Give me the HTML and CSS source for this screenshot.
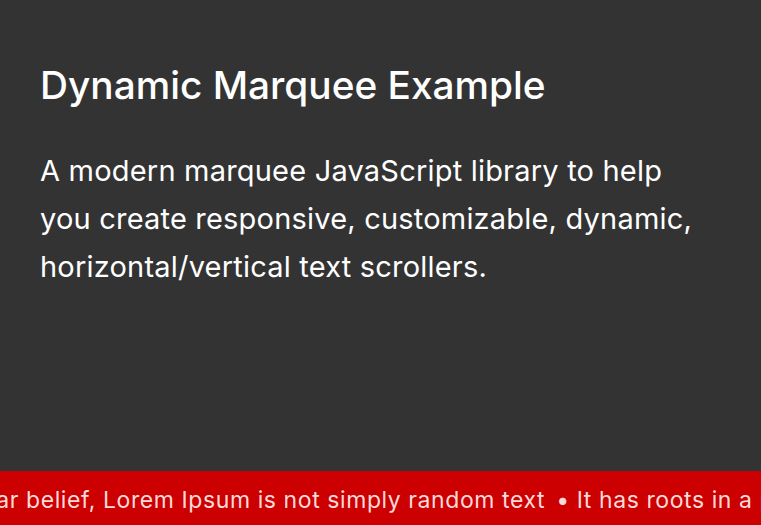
FILE: index.html
```html
<!DOCTYPE html>
<html>
<head>
<meta charset="utf-8">
<link rel="stylesheet" href="styles.css">
</head>
<body>
<div class="page">
  <main class="content">
    <h1 class="title">Dynamic Marquee Example</h1>
    <p class="lead">A modern marquee JavaScript library to help you create responsive, customizable, dynamic, horizontal/vertical text scrollers.</p>
  </main>
  <div class="marquee">
    <div class="track">Contrary to popular belief, Lorem Ipsum is not simply random text <span class="sep">•</span> It has roots in a piece of classical Latin literature from 45 BC</div>
  </div>
</div>
</body>
</html>
```
FILE: styles.css
```css
html, body {
  margin: 0;
  padding: 0;
  height: 100%;
  background: #333333;
}
body {
  font-family: Inter, "Noto Sans", sans-serif;
  color: #ffffff;
  overflow: hidden;
}
.page {
  display: flex;
  flex-direction: column;
  height: 100%;
}
.content {
  flex: 1;
  padding: 61px 40px 0 40px;
}
.title {
  margin: 0;
  font-size: 38.8px;
  font-weight: 450;
  line-height: 48px;
}
.lead {
  margin: 38px 0 0 0;
  max-width: 700px;
  font-size: 29px;
  line-height: 48px;
  font-weight: 400;
  letter-spacing: 0.2px;
}
.marquee {
  height: 54px;
  background: #cc0000;
  overflow: hidden;
  display: flex;
  align-items: center;
}
.track {
  white-space: nowrap;
  font-size: 23px;
  letter-spacing: 0.58px;
  color: #fbdada;
  padding-top: 4px;
  transform: translateX(-204px);
}
.sep {
  margin: 0 0 0 4px;
}
```
